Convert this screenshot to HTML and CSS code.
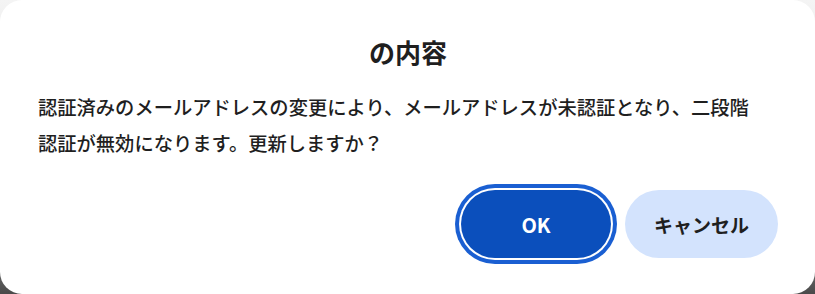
FILE: index.html
```html
<!DOCTYPE html>
<html lang="ja">
<head>
    <meta charset="UTF-8">
    <meta name="viewport" content="width=device-width, initial-scale=1.0">
    <title>確認</title>
    <link rel="stylesheet" href="styles.css">
</head>
<body>
<div class="dialog">
    <h1 class="dialog-title">の内容</h1>
    <p class="dialog-message">認証済みのメールアドレスの変更により、メールアドレスが未認証となり、二段階<br>認証が無効になります。更新しますか？</p>
    <div class="dialog-actions">
        <button class="btn btn-primary">OK</button>
        <button class="btn btn-secondary">キャンセル</button>
    </div>
</div>
</body>
</html>
```

FILE: styles.css
```css
html, body {
    margin: 0;
    padding: 0;
    height: 100%;
}
body {
    background: linear-gradient(to bottom, #f4f4f4 0%, #d8d8d8 60%, #4a4a4a 100%);
    font-family: "Noto Sans CJK JP", "Noto Sans", sans-serif;
    color: #1f1f1f;
}
.dialog {
    box-sizing: border-box;
    width: 815px;
    height: 294px;
    background-color: #ffffff;
    border-radius: 22px;
    padding: 30px 37px 0 38px;
}
.dialog-title {
    margin: 0;
    font-size: 26px;
    line-height: 44px;
    font-weight: bold;
    text-align: center;
}
.dialog-message {
    margin: 15px 0 0 0;
    font-size: 19.3px;
    line-height: 36px;
    font-weight: 500;
    white-space: nowrap;
}
.dialog-actions {
    display: flex;
    justify-content: flex-end;
    gap: 14px;
    margin-top: 29px;
}
.btn {
    height: 68px;
    border: none;
    border-radius: 34px;
    font-family: "Noto Sans CJK JP", "Noto Sans", sans-serif;
    font-size: 19px;
    font-weight: bold;
    cursor: pointer;
}
.btn-primary {
    width: 150px;
    background-color: #0b4fbc;
    color: #ffffff;
    font-size: 20px;
    box-shadow: 0 0 0 2px #ffffff, 0 0 0 6px #1a5fd2;
}
.btn-secondary {
    width: 153px;
    background-color: #d3e3fd;
    color: #1f1f1f;
}
```
